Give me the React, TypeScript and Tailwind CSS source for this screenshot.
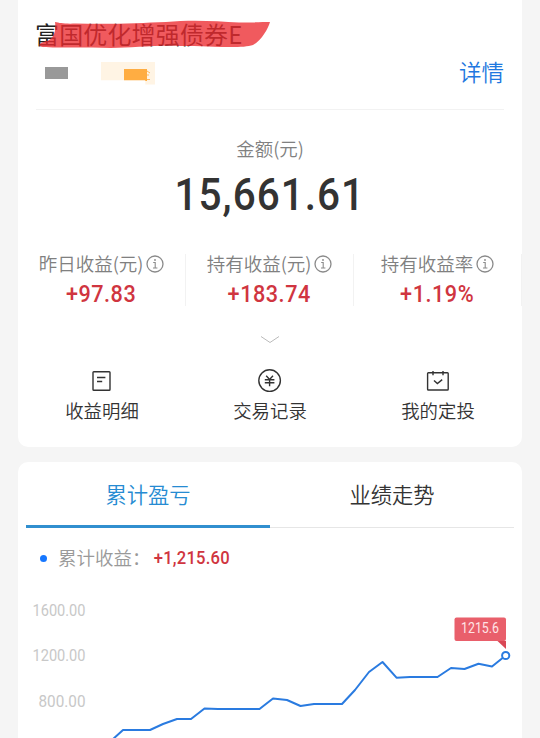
import React from 'react';

const STATS = [
  { label: '昨日收益(元)', value: '+97.83' },
  { label: '持有收益(元)', value: '+183.74' },
  { label: '持有收益率', value: '+1.19%' },
];

const AXIS = [
  { label: '1600.00', y: 22 },
  { label: '1200.00', y: 67.5 },
  { label: '800.00', y: 113.5 },
];

const LINE =
  '94,152 105,142 132,142 145,136 159,131 173,131 186.5,120.5 200,121 241.5,121 255,110.5 269,112 282.5,118 296,116 324,116 337,102 351,84 364.5,74 378.5,89.7 392,89 419.5,89 433,80 446.5,81 460.5,75.7 474,78.5 487.7,67.5';

const InfoIcon = () => (
  <svg width="18" height="18" viewBox="0 0 18 18" fill="none" stroke="#8a8a8a" className="shrink-0">
    <circle cx="9" cy="9" r="8" strokeWidth="1.3" />
    <path d="M7.2 7.5H9.2V13M7 13H11.4" strokeWidth="1.1" />
    <circle cx="9" cy="5" r="0.9" fill="#8a8a8a" stroke="none" />
  </svg>
);

const DetailIcon = () => (
  <svg width="24" height="24" viewBox="0 0 24 24" fill="none" stroke="#333" strokeWidth="1.4">
    <rect x="3" y="2.7" width="17" height="18.6" rx="0.8" />
    <path d="M7 8.5H15.4M7 12.5H12.2" />
  </svg>
);

const YenIcon = () => (
  <svg width="24" height="24" viewBox="0 0 24 24" fill="none" stroke="#333" strokeWidth="1.4">
    <circle cx="11.6" cy="11.6" r="10.8" />
    <path d="M8.2 6.8L11.6 10.4L15 6.8M11.6 10.4V17.2M6.8 10.7H16.4M6.8 13.7H16.4" />
  </svg>
);

const PlanIcon = () => (
  <svg width="24" height="24" viewBox="0 0 24 24" fill="none" stroke="#333" strokeWidth="1.4">
    <rect x="1.6" y="3.8" width="20.6" height="17.2" rx="0.8" />
    <path d="M7 2V6.2M17 2V6.2M8 11.4L11.4 14.6L16.2 10.6" />
  </svg>
);

const ACTIONS = [
  { label: '收益明细', icon: <DetailIcon /> },
  { label: '交易记录', icon: <YenIcon /> },
  { label: '我的定投', icon: <PlanIcon /> },
];

const App: React.FC = () => {
  return (
    <div className="h-[738px] w-[540px] overflow-hidden bg-[#f5f5f5] px-[18px] font-['Noto_Sans_CJK_SC',sans-serif] font-[350] text-[#333]">
      {/* Holding summary */}
      <section className="flex h-[447px] flex-col rounded-b-[10px] bg-white">
        <header className="mx-[18px] h-[110px] border-b border-[#f2f2f2] pt-4">
          <div className="relative h-9">
            <h1 className="-ml-px text-[24px] leading-9 font-normal tracking-[0.15px] whitespace-nowrap text-[#222]">富国优化增强债券E</h1>
            <svg className="absolute top-0 left-0" width="240" height="36" viewBox="0 0 240 36">
              <path
                d="M19 6C24 7 28 8 40 7.5C75 8.5 105 7 130 6C155 3.5 180 5 203 6.5C215 6.5 226 6 234 6C232 13 225 25 217 29C205 33 175 30 145 30C120 29 95 32 75 32C50 31 22 32 7 31C1 30 3 27 9 25.5C19 24 20 13 19 6Z"
                fill="#ec2b31"
                fillOpacity="0.78"
              />
            </svg>
          </div>
          <div className="flex h-10 items-center justify-between">
            <div className="flex items-center pt-0.5 pl-[9px]">
              <span className="h-3 w-[23px] bg-[#999]" />
              <span className="ml-[33px] flex h-[23px] w-[54px] items-start bg-[#fff4e4] pt-[7px] pl-[23px] [clip-path:polygon(0_0,100%_0,100%_100%,82%_100%,82%_82%,0_82%)]">
                <span className="h-3 w-[23px] bg-[#ffad42]" />
                <svg width="4" height="12" viewBox="0 0 4 12" fill="none" stroke="#ffb95e">
                  <path d="M0 2L3 4M0 6H2M0 10.5H3" />
                </svg>
              </span>
            </div>
            <a href="#" className="-mt-0.5 text-[22.5px] leading-10 text-[#1f78e0]">详情</a>
          </div>
        </header>

        <div className="flex flex-col items-center pt-6">
          <span className="text-[18.5px] leading-7 text-[#808080]">金额(元)</span>
          <strong className="mt-1.5 scale-x-[0.9] font-['Roboto'] text-[45px] leading-[54px] font-medium tracking-[1.1px]">15,661.61</strong>
        </div>

        <div className="mt-8 flex h-[52px]">
          {STATS.map((s) => (
            <div key={s.label} className="flex w-[168px] flex-col items-center border-r border-[#f2f2f2]">
              <div className="flex items-center gap-[3px] text-[18.5px] leading-[19px] text-[#808080]">
                {s.label}
                <InfoIcon />
              </div>
              <span className="mt-[5px] scale-x-[0.9] font-['Roboto'] text-[24px] leading-8 font-medium tracking-[0.6px] text-[#d03540]">
                {s.value}
              </span>
            </div>
          ))}
        </div>

        <svg className="mt-[29px] self-center" width="20" height="10" viewBox="0 0 20 10" fill="none" stroke="#bbb">
          <path d="M1 1.5L10 7.5L19 1.5" />
        </svg>

        <nav className="mt-6 flex">
          {ACTIONS.map((a) => (
            <button key={a.label} className="flex w-[168px] flex-col items-center">
              {a.icon}
              <span className="mt-[3px] text-[18.4px] leading-7">{a.label}</span>
            </button>
          ))}
        </nav>
      </section>

      {/* Profit chart */}
      <section className="mt-[15px] h-[276px] rounded-t-[10px] bg-white">
        <div className="mx-2 flex h-[66px] text-[21.3px] leading-[64px]">
          <button className="w-[244px] border-b-[3px] border-[#318fcf] text-[#268bd2]">累计盈亏</button>
          <button className="w-[244px] border-b border-[#e6e6e6] pb-0.5">业绩走势</button>
        </div>
        <div className="flex h-[60px] items-center pl-[22px]">
          <i className="h-[7px] w-[7px] rounded-full bg-[#1677ff]" />
          <span className="ml-[11px] text-[18.5px] text-[#999]">累计收益：</span>
          <span className="origin-left scale-x-[0.89] pl-[3px] font-['Roboto'] text-[18.7px] font-medium tracking-[0.25px] text-[#d03540]">+1,215.60</span>
        </div>
        <svg width="504" height="150" viewBox="0 0 504 150">
          <g className="font-['Roboto'] text-[16.5px] font-normal" fill="#c8c8c8" textAnchor="end">
            {AXIS.map((t) => (
              <text key={t.label} x="67.5" y={t.y + 5.5} textLength={t.label.length > 6 ? 53 : 47} lengthAdjust="spacingAndGlyphs">
                {t.label}
              </text>
            ))}
          </g>
          <polyline points={LINE} fill="none" stroke="#2a7be0" strokeWidth="2" strokeLinejoin="round" />
          <circle cx="487.7" cy="67.5" r="3.6" fill="#fff" stroke="#2a7be0" strokeWidth="2" />
          <rect x="436.5" y="29.5" width="51.5" height="23.5" rx="2" fill="#e95f6b" />
          <path d="M479.5 53H488V61Z" fill="#d94755" />
          <text x="462" y="45" textAnchor="middle" fill="#ffe4e6" className="font-['Roboto'] text-[14px] font-normal" textLength="38" lengthAdjust="spacingAndGlyphs">
            1215.6
          </text>
        </svg>
      </section>
    </div>
  );
};

export default App;
